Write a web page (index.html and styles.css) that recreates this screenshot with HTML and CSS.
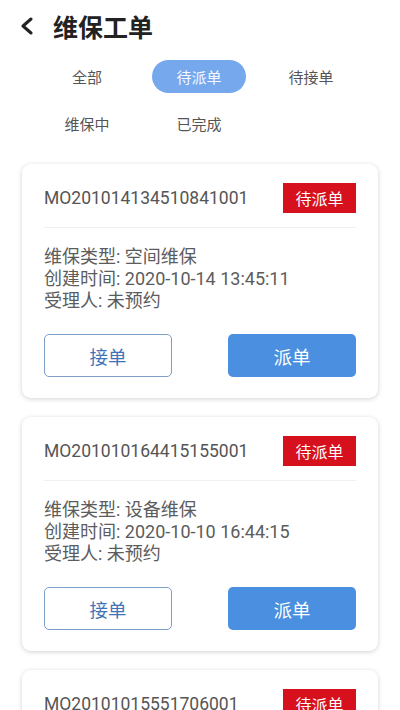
FILE: index.html
```html
<!DOCTYPE html>
<html lang="zh-CN">
<head>
<meta charset="utf-8">
<title>维保工单</title>
<link rel="stylesheet" href="styles.css">
</head>
<body>
<div class="page">
  <header class="header">
    <svg class="back" width="16" height="18" viewBox="0 0 16 18"><path d="M12 2 L4 9 L12 16" fill="none" stroke="#222" stroke-width="3" stroke-linecap="round" stroke-linejoin="round"/></svg>
    <h1 class="title">维保工单</h1>
  </header>
  <nav class="tabs">
    <span class="tab">全部</span>
    <span class="tab"><span class="pill">待派单</span></span>
    <span class="tab">待接单</span>
    <span class="tab">维保中</span>
    <span class="tab">已完成</span>
  </nav>
  <main class="list">
    <section class="card">
      <div class="card-head">
        <span class="order">MO201014134510841001</span>
        <span class="badge">待派单</span>
      </div>
      <div class="info">
        <p>维保类型: 空间维保</p>
        <p>创建时间: 2020-10-14 13:45:11</p>
        <p>受理人: 未预约</p>
      </div>
      <div class="actions">
        <button class="btn btn-outline">接单</button>
        <button class="btn btn-solid">派单</button>
      </div>
    </section>
    <section class="card">
      <div class="card-head">
        <span class="order">MO201010164415155001</span>
        <span class="badge">待派单</span>
      </div>
      <div class="info">
        <p>维保类型: 设备维保</p>
        <p>创建时间: 2020-10-10 16:44:15</p>
        <p>受理人: 未预约</p>
      </div>
      <div class="actions">
        <button class="btn btn-outline">接单</button>
        <button class="btn btn-solid">派单</button>
      </div>
    </section>
    <section class="card">
      <div class="card-head">
        <span class="order">MO20101015551706001</span>
        <span class="badge">待派单</span>
      </div>
      <div class="info">
        <p>维保类型: 设备维保</p>
        <p>创建时间: 2020-10-10 15:55:17</p>
        <p>受理人: 未预约</p>
      </div>
      <div class="actions">
        <button class="btn btn-outline">接单</button>
        <button class="btn btn-solid">派单</button>
      </div>
    </section>
  </main>
</div>
</body>
</html>
```

FILE: styles.css
```css
* { box-sizing: border-box; }
html, body {
  margin: 0;
  padding: 0;
  background: #ffffff;
  font-family: Roboto, "Noto Sans CJK SC", sans-serif;
  color: #555;
}
.page {
  width: 400px;
  height: 710px;
  overflow: hidden;
}
.header {
  display: flex;
  align-items: center;
  height: 52px;
  padding: 0 0 0 19px;
}
.back {
  display: block;
  margin-right: 18px;
}
.title {
  margin: 0;
  font-size: 25px;
  font-weight: 700;
  color: #222;
  letter-spacing: 0;
}
.tabs {
  display: grid;
  grid-template-columns: repeat(3, 112px);
  grid-auto-rows: 33px;
  row-gap: 14px;
  padding: 8px 0 0 31px;
}
.tab {
  display: flex;
  align-items: center;
  justify-content: center;
  font-size: 15px;
  color: #555;
}
.pill {
  display: flex;
  align-items: center;
  justify-content: center;
  width: 94px;
  height: 33px;
  border-radius: 17px;
  background: #76a8ee;
  color: #f4f8ff;
}
.list {
  display: flex;
  flex-direction: column;
  gap: 19px;
  padding: 24px 22px 0 22px;
}
.card {
  background: #fff;
  border-radius: 9px;
  box-shadow: 0 1px 5px rgba(0,0,0,0.18);
  padding: 19px 22px 21px 22px;
}
.card-head {
  display: flex;
  align-items: center;
  justify-content: space-between;
  padding-bottom: 14px;
  border-bottom: 1px solid #f0f0f0;
}
.order {
  font-size: 17.5px;
  color: #555;
}
.badge {
  display: flex;
  align-items: center;
  justify-content: center;
  width: 73px;
  height: 30px;
  background: #d6101d;
  color: #fff;
  font-size: 16px;
}
.info {
  padding-top: 18px;
}
.info p {
  margin: 0;
  font-size: 18px;
  line-height: 22px;
  color: #5c5c5c;
}
.actions {
  display: flex;
  justify-content: space-between;
  margin-top: 22px;
}
.btn {
  width: 128px;
  height: 43px;
  border-radius: 5px;
  font-family: Roboto, "Noto Sans CJK SC", sans-serif;
  font-size: 18.5px;
  padding: 0;
}
.btn-outline {
  background: #fff;
  border: 1.5px solid #7d9ec9;
  color: #3f75b8;
}
.btn-solid {
  background: #4a8fe0;
  border: none;
  color: #fff;
}
```
